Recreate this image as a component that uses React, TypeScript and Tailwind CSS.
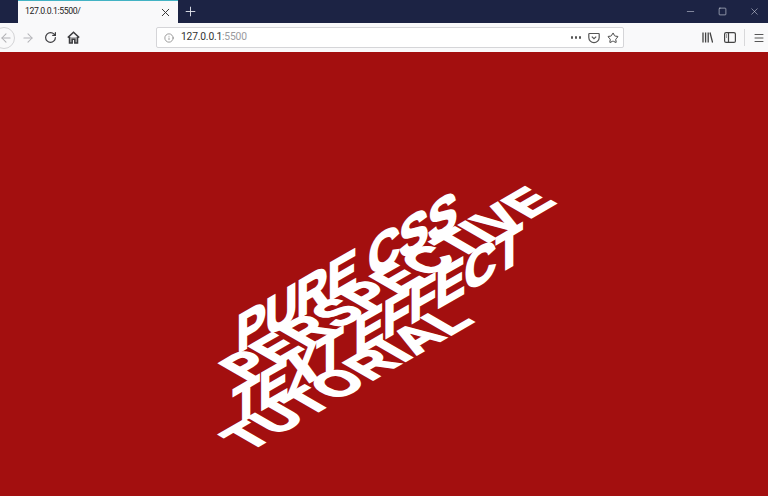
import React from "react";
import { ArrowLeft, ArrowRight, RotateCw, Info, Star, Menu, X, Plus, Minus, Square } from "lucide-react";

export default function App() {
  return (
    <div className="w-[768px] h-[496px] overflow-hidden flex flex-col bg-[#a30f0f] font-['Roboto','Noto_Sans',sans-serif]">
      {/* title bar */}
      <div className="h-[23px] shrink-0 bg-[#1c2344] flex items-stretch text-white">
        <div className="ml-[18px] w-[160px] bg-[#f9f9fa] border-t border-[#43b3c4] flex items-center pl-[7px] pr-[6px] text-[#222] text-[8.7px] tracking-[-0.4px]">
          <span className="flex-1 truncate">127.0.0.1:5500/</span>
          <X size={13} strokeWidth={1.8} className="text-[#333]" />
        </div>
        <div className="w-[24px] flex items-center justify-center">
          <Plus size={15} strokeWidth={1.5} className="text-[#dfe1ea]" />
        </div>
        <div className="flex-1" />
        <div className="flex items-center text-[#d5d8e4] pr-[8px] gap-[21px]">
          <Minus size={11} strokeWidth={1.2} />
          <Square size={9} strokeWidth={1.6} className="mx-[1px]" />
          <X size={11} strokeWidth={1.2} />
        </div>
      </div>
      {/* toolbar */}
      <div className="h-[29px] shrink-0 bg-[#f9f9fa] flex items-center relative text-[#3c3c3f]">
        <div className="w-[22px] h-[22px] -ml-[7px] rounded-full border border-[#d4d4d6] flex items-center justify-center shrink-0 text-[#b0b0b4]">
          <ArrowLeft size={14} strokeWidth={1.8} className="ml-[3px]" />
        </div>
        <ArrowRight size={14} strokeWidth={1.8} className="ml-[6px] text-[#b4b4b8] shrink-0" />
        <RotateCw size={13} strokeWidth={2.2} className="ml-[9px] shrink-0" />
        <svg width="13" height="13" viewBox="0 0 13 13" fill="none" stroke="#3c3c3f" strokeWidth="1.5" className="ml-[10px] shrink-0">
          <path d="M.8 6.6 6.5 1.2l5.7 5.4" />
          <path d="M2.5 6v6h2.7V8.2h2.6V12h2.7V6" fill="#3c3c3f" fillOpacity=".35" />
        </svg>
        <div className="ml-[76px] w-[468px] h-[21px] bg-white border border-[#d5d5d8] rounded-[2px] flex items-center pl-[7px] pr-[4px] shrink-0">
          <Info size={10} strokeWidth={1.5} className="text-[#666] shrink-0" />
          <span className="ml-[7px] text-[10.3px] tracking-[-0.2px] text-[#333] leading-none flex-1">
            127.0.0.1<span className="text-[#9a9a9e]">:5500</span>
          </span>
          <span className="flex gap-[1.5px] mr-[7px]">
            <i className="w-[2.5px] h-[2.5px] rounded-full bg-[#555]" />
            <i className="w-[2.5px] h-[2.5px] rounded-full bg-[#555]" />
            <i className="w-[2.5px] h-[2.5px] rounded-full bg-[#555]" />
          </span>
          <svg width="12" height="12" viewBox="0 0 12 12" fill="none" stroke="#555" strokeWidth="1.2" className="mr-[7px]">
            <path d="M1.5 1.5h9a.7.7 0 0 1 .7.7v3.3a5.2 5.2 0 0 1-10.4 0V2.2a.7.7 0 0 1 .7-.7z" />
            <path d="M3.8 4.6 6 6.7l2.2-2.1" />
          </svg>
          <Star size={12} strokeWidth={2} className="text-[#444]" />
        </div>
        <svg width="11" height="11" viewBox="0 0 11 11" fill="none" stroke="#444" strokeWidth="1.3" className="ml-[78px] shrink-0">
          <path d="M1 0.5v10M3.6 0.5v10M6.2 0.5v10M8 0.5l2.6 10" />
        </svg>
        <svg width="12" height="11" viewBox="0 0 12 11" fill="none" stroke="#444" strokeWidth="1.2" className="ml-[11px] shrink-0">
          <rect x=".6" y=".6" width="10.8" height="9.8" rx="1.5" />
          <path d="M4.5 1v9M2 3h1M2 5h1" />
        </svg>
        <div className="ml-[8px] w-px h-[17px] bg-[#d8d8da] shrink-0" />
        <Menu size={12} strokeWidth={1.8} className="ml-[8px] shrink-0 text-[#444]" />
      </div>
      {/* page */}
      <div className="flex-1 bg-[#a30f0f] overflow-hidden pl-[210px] pt-[257px] flex flex-col font-['Liberation_Sans',Arial,sans-serif] font-bold text-[50px] leading-[50px] text-white whitespace-nowrap [-webkit-text-stroke:2.2px_white]">
        <div className="h-[50px] shrink-0 origin-top-left tracking-[-0.2px] [transform:matrix(0.866,-0.5,0,1.06,27,0)]">PURE CSS</div>
        <div className="h-[50px] shrink-0 origin-top-left tracking-[0.9px] [transform:matrix(0.866,-0.5,0.866,0.5,0,2)]">PERSPECTIVE</div>
        <div className="h-[50px] shrink-0 origin-top-left tracking-[-0.2px] [transform:matrix(0.866,-0.5,0,1.06,23,-27)]">TEXT EFFECT</div>
        <div className="h-[50px] shrink-0 origin-top-left tracking-[1.4px] [transform:matrix(0.866,-0.5,0.866,0.5,2,-28)]">TUTORIAL</div>
      </div>
    </div>
  );
}
